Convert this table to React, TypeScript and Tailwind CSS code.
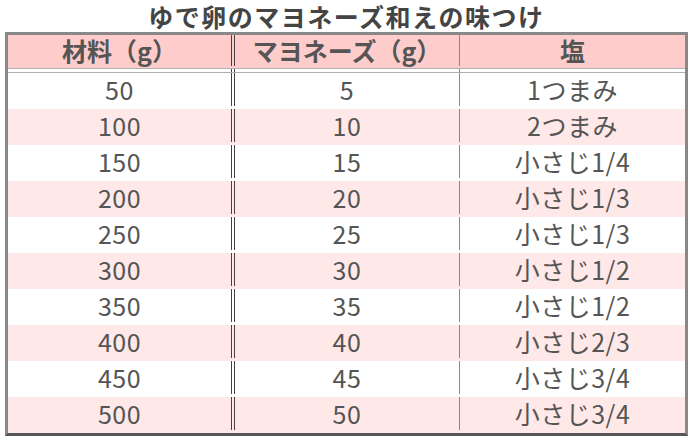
const rows = [
  ["50", "5", "1つまみ"],
  ["100", "10", "2つまみ"],
  ["150", "15", "小さじ1/4"],
  ["200", "20", "小さじ1/3"],
  ["250", "25", "小さじ1/3"],
  ["300", "30", "小さじ1/2"],
  ["350", "35", "小さじ1/2"],
  ["400", "40", "小さじ2/3"],
  ["450", "45", "小さじ3/4"],
  ["500", "50", "小さじ3/4"],
];

function Row({ cells, className }: { cells: React.ReactNode[]; className: string }) {
  return (
    <div className={`flex ${className}`}>
      <div className="w-[223px] flex-none flex items-center justify-center">{cells[0]}</div>
      {/* double divider */}
      <div className="w-[4px] flex-none border-x border-[#444]" />
      <div className="w-[225px] flex-none border-r border-[#888] flex items-center justify-center">{cells[1]}</div>
      <div className="flex-1 flex items-center justify-center">{cells[2]}</div>
    </div>
  );
}

export default function App() {
  return (
    <div
      className="w-[693px] h-[440px] bg-white text-[#555] overflow-hidden"
      style={{ fontFamily: '"Noto Sans CJK JP", "Noto Sans", sans-serif' }}
    >
      <h1 className="h-[32px] leading-[32px] text-center text-[25px] font-bold text-[#444] tracking-[1.5px]">
        ゆで卵のマヨネーズ和えの味つけ
      </h1>
      <div className="mx-[5px] border-[3px] border-[#888] border-b-[#555]">
        <Row
          className="h-[33px] pb-[2px] bg-[#ffcccc] text-[25px] font-bold leading-none"
          cells={["材料（g）", "マヨネーズ（g）", "塩"]}
        />
        <Row className="h-[5px] bg-white border-y border-[#b0b0b0]" cells={[null, null, null]} />
        {rows.map((r, i) => (
          <Row
            key={i}
            className={`h-[36px] pb-[3px] text-[25px] tracking-[0.5px] leading-none ${i % 2 === 0 ? "bg-white" : "bg-[#ffe8e8]"}`}
            cells={r}
          />
        ))}
      </div>
    </div>
  );
}
